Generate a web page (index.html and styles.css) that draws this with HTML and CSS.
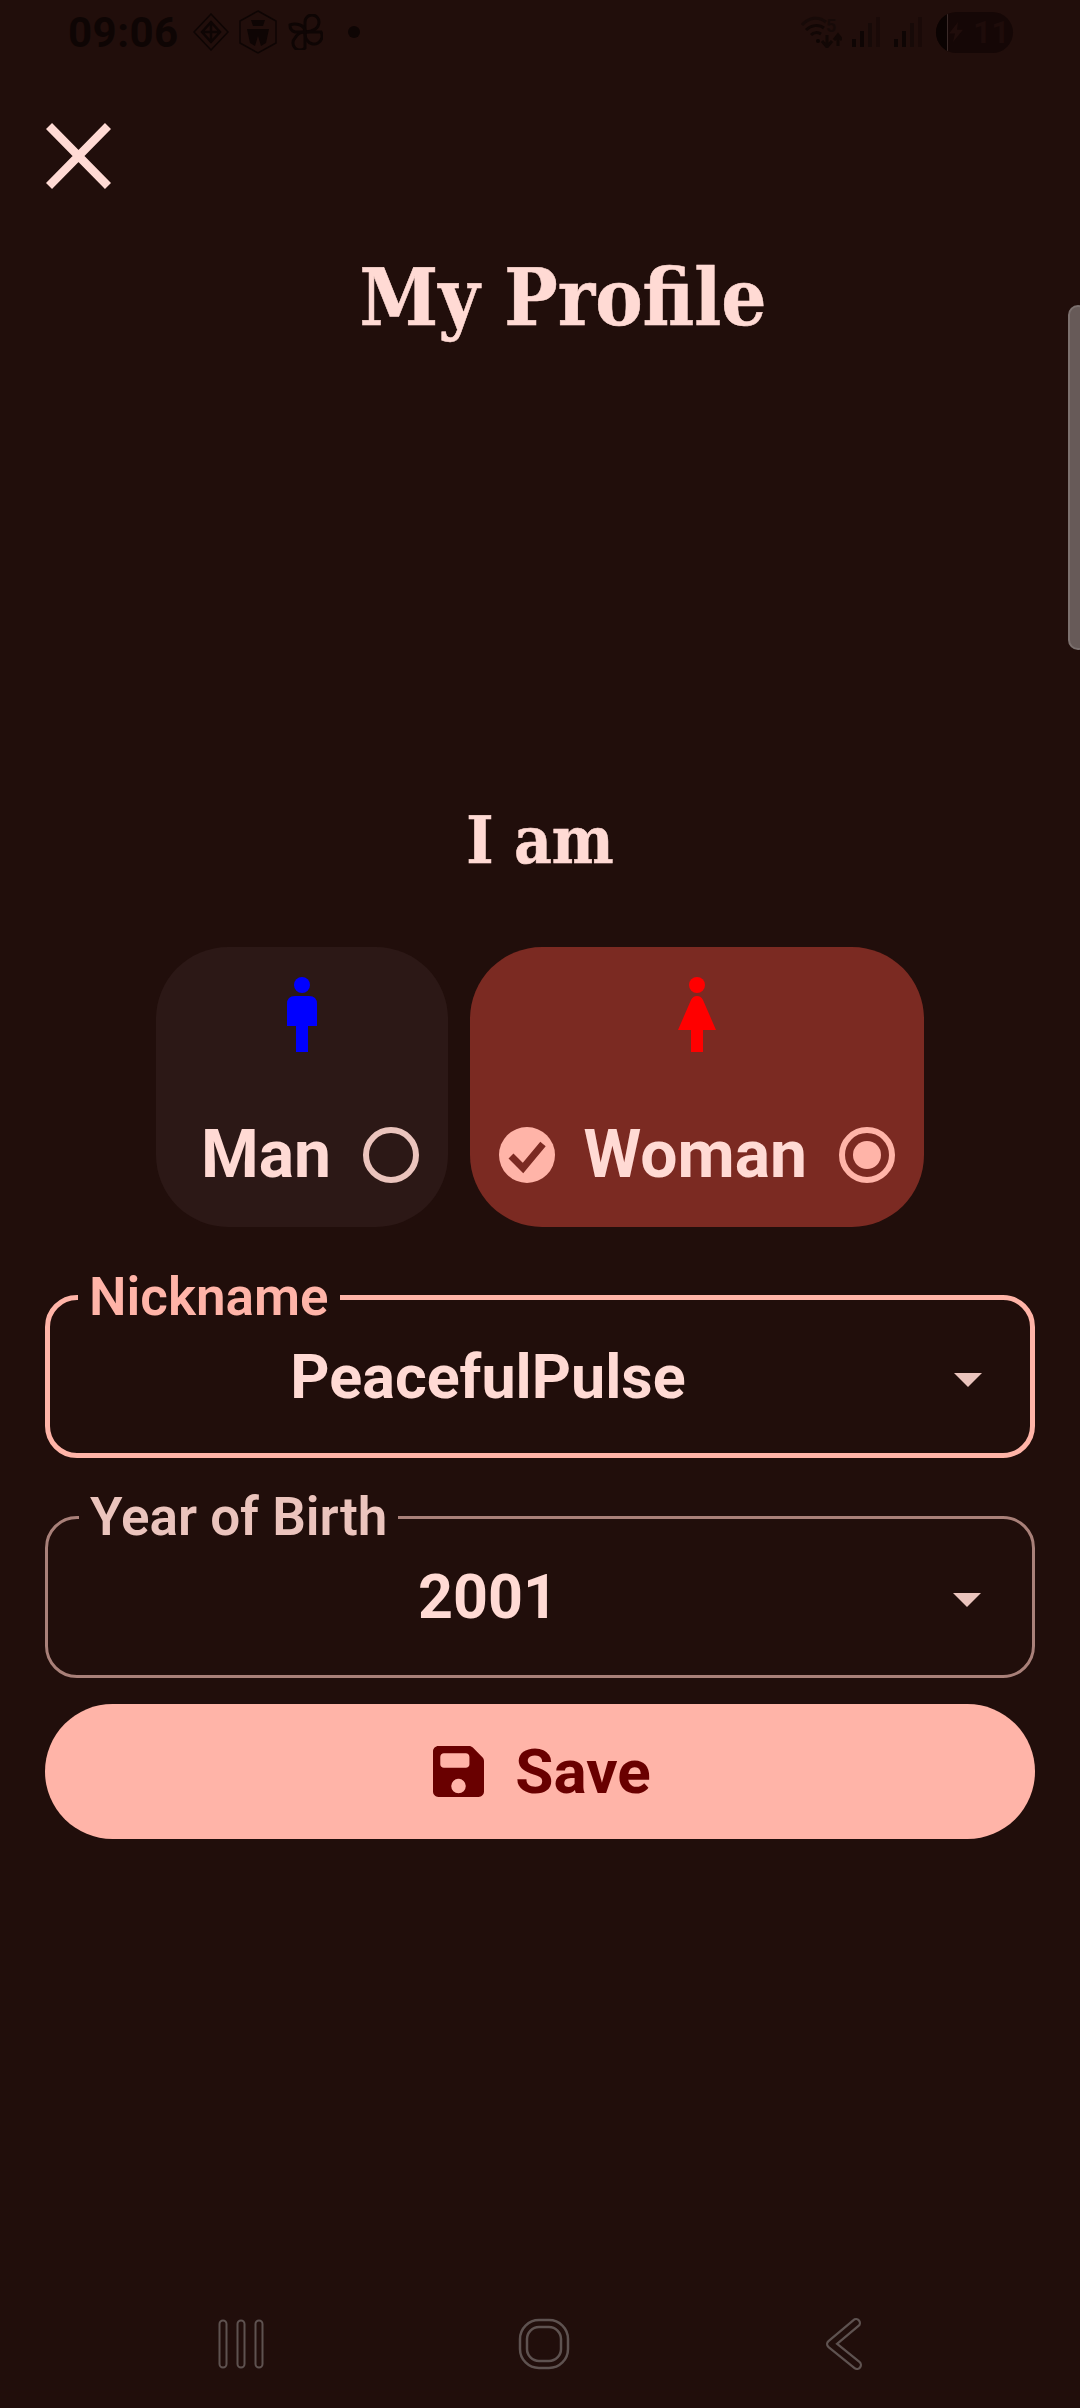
FILE: index.html
```html
<!DOCTYPE html>
<html lang="en">

<head>
    <meta charset="UTF-8">
    <meta name="viewport" content="width=device-width, initial-scale=1.0">
    <title>My Profile</title>
    <link rel="stylesheet" href="styles.css">
</head>

<body>
    <div class="status-bar">
        <div class="status-left">
            <span class="status-time">09:06</span>
            <svg class="status-icon" width="36" height="38" viewBox="0 0 36 38" fill="none" stroke="#0e0504" stroke-width="1.500">
                <path d="M18 1 35 19 18 37 1 19Z" />
                <path d="M18 9 27 19 18 29 9 19Z M9 19H27 M18 9V29" stroke-width="2.500" />
            </svg>
            <svg class="status-icon" width="38" height="44" viewBox="0 0 38 44" fill="none" stroke="#0e0504" stroke-width="1.500">
                <path d="M19 1 37 11V33L19 43 1 33V11Z" />
                <path d="M12 10H26L24 16H14Z M8 19H30L27 33 22 36 19 26 16 36 11 33Z" fill="#0e0504" stroke="none" />
            </svg>
            <svg class="status-icon" width="36" height="36" viewBox="0 0 36 36" fill="none" stroke="#0e0504" stroke-width="3">
                <path d="M18 18V8A7 7 0 0 1 32 8C32 14 26 18 18 18Z" />
                <path d="M18 18H34A8 8 0 0 1 20 26C18 24 18 22 18 18Z" />
                <path d="M18 18V34A7 7 0 0 1 8 24C10 20 14 18 18 18Z" />
                <path d="M18 18H8A7 7 0 0 1 3 11C8 9 18 10 18 18Z" />
            </svg>
            <span class="status-dot"></span>
        </div>
        <div class="status-right">
            <svg width="41" height="32" viewBox="0 0 41 32" fill="none" stroke="#120705" stroke-width="3">
                <path d="M1 9C8 1 18 0 25 6" stroke="#170a08" />
                <path d="M5 14C10 9 18 8 23 12" />
                <path d="M10 19C13 16 17 16 20 18" />
                <circle cx="17" cy="25" r="2" fill="#0e0504" stroke="none" />
                <path d="M26 19V30M21 25 26 31 31 25" />
                <path d="M37 30V19M33 24 37 19 41 24" />
            </svg>
            <span class="wifi-five">5</span>
            <svg width="28" height="30" viewBox="0 0 28 30" class="signal">
                <rect x="0" y="22" width="4" height="8" fill="#0e0504" />
                <rect x="8" y="14" width="4" height="16" fill="#0e0504" />
                <rect x="16" y="6" width="4" height="24" fill="#170a08" />
                <rect x="24" y="0" width="4" height="30" fill="#1a0a08" />
            </svg>
            <svg width="28" height="30" viewBox="0 0 28 30" class="signal second">
                <rect x="0" y="22" width="4" height="8" fill="#0e0504" />
                <rect x="8" y="14" width="4" height="16" fill="#0e0504" />
                <rect x="16" y="6" width="4" height="24" fill="#170a08" />
                <rect x="24" y="0" width="4" height="30" fill="#1a0a08" />
            </svg>
            <div class="battery">
                <span class="battery-level"></span>
                <svg width="14" height="20" viewBox="0 0 14 26" preserveAspectRatio="none">
                    <path d="M9 0 0 15H6L4 26 14 10H8Z" fill="#200d0b" />
                </svg>
                <span class="battery-text">11</span>
            </div>
        </div>
    </div>

    <div class="scrollbar"></div>

    <button class="close-btn">
        <svg width="65" height="66" viewBox="0 0 65 66">
            <path d="M3 3 62 63M62 3 3 63" stroke="#ffdad4" stroke-width="8.500" fill="none" />
        </svg>
    </button>

    <h1 class="title">My Profile</h1>

    <h2 class="subtitle">I am</h2>

    <div class="gender-row">
        <div class="gender-card man">
            <svg class="gender-icon" width="30" height="75" viewBox="0 0 30 75">
                <circle cx="15" cy="8" r="8" fill="#0000ff" />
                <path d="M0 27Q0 19 8 19H22Q30 19 30 27V49H21V75H9V49H0Z" fill="#0000ff" />
            </svg>
            <div class="gender-label">
                <span>Man</span>
                <span class="radio"></span>
            </div>
        </div>
        <div class="gender-card woman selected">
            <svg class="gender-icon" width="38" height="75" viewBox="0 0 38 75">
                <circle cx="19" cy="8" r="8" fill="#ff0000" />
                <path d="M13 23Q15 19 19 19Q23 19 25 23L38 53H25V75H13V53H0Z" fill="#ff0000" />
            </svg>
            <div class="gender-label">
                <svg width="56" height="56" viewBox="0 0 56 56">
                    <circle cx="28" cy="28" r="28" fill="#ffb4a8" />
                    <path d="M12 29 24 41 44 17" fill="none" stroke="#7b2a22" stroke-width="7" />
                </svg>
                <span>Woman</span>
                <span class="radio checked"></span>
            </div>
        </div>
    </div>

    <fieldset class="field focused">
        <legend>Nickname</legend>
        <div class="field-value">
            <span>PeacefulPulse</span>
            <i class="arrow"></i>
        </div>
    </fieldset>

    <fieldset class="field">
        <legend>Year of Birth</legend>
        <div class="field-value">
            <span>2001</span>
            <i class="arrow"></i>
        </div>
    </fieldset>

    <button class="save-btn">
        <svg width="51" height="51" viewBox="0 0 448 448">
            <path fill="#690000" d="M48 0C21.500 0 0 21.500 0 48V400C0 426.500 21.500 448 48 448H400C426.500 448 448 426.500 448 400V131.900C448 119.200 442.900 107 433.900 98L350 14.100C341 5.100 328.800 0 316.100 0ZM64 96C64 78.300 78.300 64 96 64H288C305.700 64 320 78.300 320 96V160C320 177.700 305.700 192 288 192H96C78.300 192 64 177.700 64 160ZM224 288A64 64 0 1 1 224 416A64 64 0 1 1 224 288Z" fill-rule="evenodd" />
        </svg>
        Save
    </button>

    <div class="nav-bar">
        <svg width="46" height="50" viewBox="0 0 46 50" fill="none" stroke-linecap="round">
            <path d="M5 5V45M23 5V45M41 5V45" stroke="#5e5250" stroke-width="9" />
            <path d="M5 5V45M23 5V45M41 5V45" stroke="#210e0b" stroke-width="5" />
        </svg>
        <svg width="52" height="52" viewBox="0 0 52 52" fill="none" stroke="#5e5250" stroke-width="2.500">
            <rect x="2" y="2" width="48" height="48" rx="19" />
            <rect x="9" y="9" width="34" height="34" rx="12" />
        </svg>
        <svg width="38" height="52" viewBox="0 0 38 52" fill="none" stroke-linecap="round" stroke-linejoin="round">
            <path d="M32 5 7 26 33 47" stroke="#5e5250" stroke-width="10" />
            <path d="M32 5 7 26 33 47" stroke="#210e0b" stroke-width="5.500" />
        </svg>
    </div>
</body>

</html>
```

FILE: styles.css
```css
body {
    font-family: 'Roboto', 'Liberation Sans', sans-serif;
    background: #210e0b;
    color: #ffdad4;
    margin: 0;
    width: 1080px;
    height: 2408px;
    overflow: hidden;
    position: relative;
    display: flex;
    flex-direction: column;
}

/* status bar is almost invisible on this background */
.status-bar {
    height: 64px;
    padding: 0 67px 0 68px;
    display: flex;
    justify-content: space-between;
    align-items: center;
    color: #0e0504;
}

.status-left {
    display: flex;
    align-items: center;
}

.status-time {
    font-size: 42px;
    font-weight: 700;
    letter-spacing: 0.5px;
    margin-right: 14px;
}

.status-icon {
    margin-right: 10px;
}

.status-dot {
    width: 12px;
    height: 12px;
    border-radius: 50%;
    background: #0e0504;
    margin-left: 15px;
}

.status-right {
    display: flex;
    align-items: center;
    position: relative;
}

.wifi-five {
    position: absolute;
    left: 25px;
    top: 4px;
    font-size: 18px;
    line-height: 20px;
    font-weight: 700;
    color: #170a08;
}

.signal {
    margin-left: 10px;
}

.signal.second {
    margin-left: 14px;
}

.battery {
    width: 77px;
    height: 41px;
    margin-left: 14px;
    border-radius: 21px;
    background: #150706;
    display: flex;
    align-items: center;
    position: relative;
    overflow: hidden;
    padding-left: 13px;
    box-sizing: border-box;
    gap: 10px;
}

.battery-level {
    position: absolute;
    left: 0;
    top: 0;
    bottom: 0;
    width: 11px;
    background: #0b0302;
    border-right: 1px solid #3a2a28;
}

.battery-text {
    font-size: 32px;
    font-weight: 700;
    color: #1e0c0a;
}

.scrollbar {
    position: absolute;
    left: 1068px;
    top: 305px;
    width: 20px;
    height: 345px;
    box-sizing: border-box;
    border: 2px solid #7b706e;
    border-radius: 10px;
    background: #675a58;
}

.close-btn {
    align-self: flex-start;
    margin: 59px 0 0 46px;
    padding: 0;
    background: none;
    border: none;
    height: 66px;
}

.title {
    font-family: 'DejaVu Serif Condensed', 'DejaVu Serif', serif;
    font-stretch: condensed;
    font-size: 79px;
    font-weight: 700;
    line-height: 90px;
    text-align: center;
    margin: 0;
    margin-top: 64px;
    padding-left: 46px;
    -webkit-text-stroke: 0.5px #ffdad4;
}

.subtitle {
    font-family: 'DejaVu Serif Condensed', 'DejaVu Serif', serif;
    font-stretch: condensed;
    font-size: 65px;
    font-weight: 700;
    line-height: 76px;
    text-align: center;
    margin: 0;
    margin-top: 459px;
    -webkit-text-stroke: 0.5px #ffdad4;
}

.gender-row {
    display: flex;
    justify-content: center;
    gap: 22px;
    margin-top: 69px;
}

.gender-card {
    width: 292px;
    height: 280px;
    border-radius: 72px;
    background: #2c1816;
    box-sizing: border-box;
    padding: 30px 29px 0;
    display: flex;
    flex-direction: column;
    align-items: center;
}

.gender-card.selected {
    width: 454px;
    background: #7b2a22;
}

.gender-icon {
    display: block;
    height: 75px;
}

.gender-label {
    align-self: flex-end;
    display: flex;
    align-items: center;
    gap: 32px;
    margin-top: 75px;
    font-size: 66px;
    font-weight: 700;
    line-height: 56px;
}

.woman .gender-label svg {
    margin-right: -3px;
}

.radio {
    width: 56px;
    height: 56px;
    box-sizing: border-box;
    border: 6px solid #ebc4bd;
    border-radius: 50%;
    display: flex;
    align-items: center;
    justify-content: center;
}

.radio.checked {
    border-color: #ffb4a8;
}

.radio.checked::after {
    content: '';
    width: 28px;
    height: 28px;
    border-radius: 50%;
    background: #ffb4a8;
}

.field {
    margin: 0 45px;
    padding: 0;
    border: 3px solid #a98079;
    border-radius: 32px;
    height: 189px;
    box-sizing: border-box;
    color: #ffdad4;
}

.field legend {
    margin-left: 31px;
    padding: 0 11px;
    font-size: 53px;
    font-weight: 600;
    line-height: 56px;
    color: #ebc4bd;
}

.field.focused {
    border: 5px solid #ffb4a8;
    margin-top: 42px;
}

.field.focused legend {
    margin-left: 28px;
    color: #ffb4a8;
}

.field + .field {
    margin-top: 31px;
}

.field-value {
    height: 103px;
    display: flex;
    align-items: center;
    justify-content: center;
    font-size: 61px;
    font-weight: 700;
    padding-right: 104px;
    position: relative;
}

.arrow {
    position: absolute;
    right: 51px;
    top: 48px;
    border-left: 14px solid transparent;
    border-right: 14px solid transparent;
    border-top: 14px solid #ebc4bd;
}

.focused .arrow {
    right: 48px;
}

.save-btn {
    margin: 26px 45px 0;
    height: 135px;
    padding-left: 10px;
    border: none;
    border-radius: 68px;
    background: #ffb4a8;
    color: #690000;
    font-family: inherit;
    font-size: 62px;
    font-weight: 700;
    display: flex;
    align-items: center;
    justify-content: center;
    gap: 31px;
}

.nav-bar {
    margin-top: auto;
    height: 88px;
    padding: 0 218px 20px;
    display: flex;
    justify-content: space-between;
    align-items: center;
}
```
